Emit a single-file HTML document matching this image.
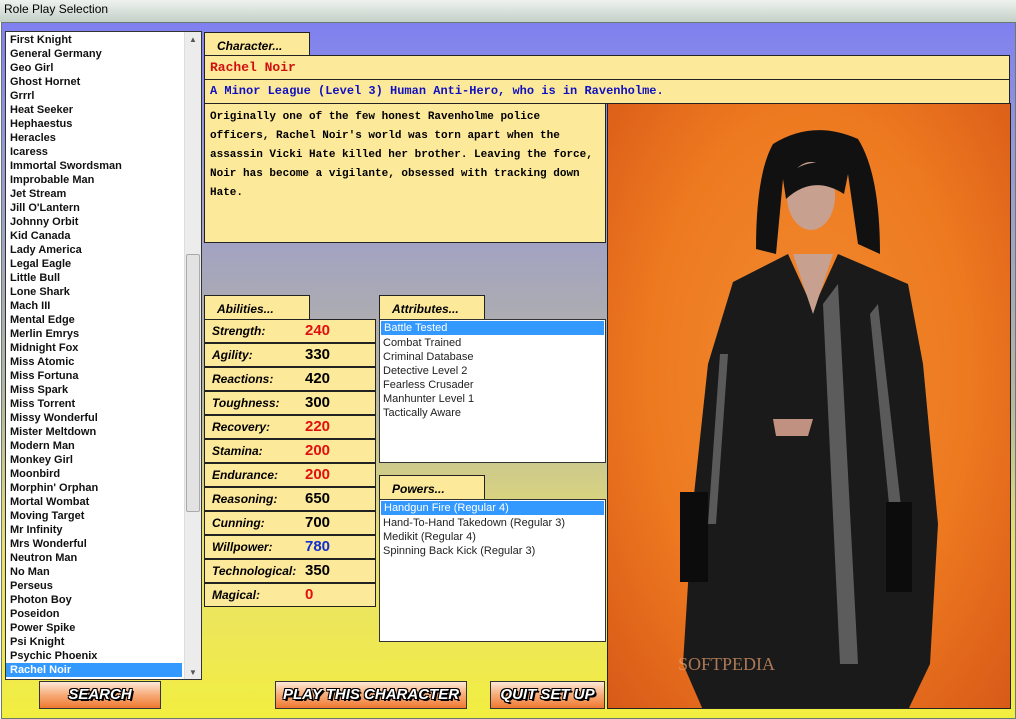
<!DOCTYPE html>
<html><head><meta charset="utf-8"><style>
*{margin:0;padding:0;box-sizing:border-box}
body{width:1016px;height:719px;overflow:hidden;position:relative;font-family:"Liberation Sans",sans-serif;background:#fff}
.title{position:absolute;left:0;top:0;width:1016px;height:22px;background:linear-gradient(#eef2ee,#c4d0c8);font-size:12px;padding:2px 4px;color:#000}
.main{position:absolute;left:1px;top:22px;width:1015px;height:697px;border:1px solid #6a7a70;background:linear-gradient(180deg,#7f80f0 0%,#9698d8 18%,#a8a8b8 38%,#b8b8a0 55%,#e8e070 75%,#f2ee40 100%)}
.abs{position:absolute}
.list{left:5px;top:31px;width:197px;height:649px;background:#fff;border:1px solid #333;padding-top:1px}
.list .it{height:14px;font-size:11px;font-weight:bold;line-height:14px;padding-left:4px;color:#111;width:176px}
.list .sel{background:#3399ff;color:#fff}
.sb{position:absolute;right:0;top:0;width:17px;height:100%;background:#ececec;border-left:1px solid #ddd}
.thumb{position:absolute;left:1px;top:222px;width:14px;height:258px;background:#e2e2e2;border:1px solid #aaa;border-radius:2px}
.panel{background:#fde99a;border:1px solid #222}
.tab{background:#fde99a;border:1px solid #222;border-bottom:none;font-weight:bold;font-style:italic;font-size:12px;padding:6px 0 0 12px}
.cm{font-family:"Liberation Mono",monospace;font-weight:bold}
.row{position:absolute;left:204px;width:172px;height:24px;background:#fde99a;border:1px solid #222;font-weight:bold;font-style:italic;font-size:12px;line-height:22px;padding-left:7px}
.row span{position:absolute;left:100px;font-style:normal;font-size:15px;font-family:"Liberation Sans",sans-serif;font-weight:bold}
.lb{background:#fff;border:1px solid #333;font-size:11px}
.lb div{height:14px;line-height:14px;padding-left:3px;color:#222}
.lb .sel{background:#3399ff;color:#fff;margin:1px}
.btn{position:absolute;top:681px;height:28px;border:1px solid #333;background:linear-gradient(#fde8d8,#f7b080 45%,#f07830);color:#fff;font-weight:bold;font-style:italic;font-size:15px;text-align:center;line-height:26px;text-shadow:-1px -1px 0 #000,1px -1px 0 #000,-1px 1px 0 #000,1px 1px 0 #000,2px 2px 0 #000}
</style></head><body>
<div class="title">Role Play Selection</div>
<div class="main"></div>
<div class="abs list">
<div class="it">First Knight</div><div class="it">General Germany</div><div class="it">Geo Girl</div><div class="it">Ghost Hornet</div><div class="it">Grrrl</div><div class="it">Heat Seeker</div><div class="it">Hephaestus</div><div class="it">Heracles</div><div class="it">Icaress</div><div class="it">Immortal Swordsman</div><div class="it">Improbable Man</div><div class="it">Jet Stream</div><div class="it">Jill O'Lantern</div><div class="it">Johnny Orbit</div><div class="it">Kid Canada</div><div class="it">Lady America</div><div class="it">Legal Eagle</div><div class="it">Little Bull</div><div class="it">Lone Shark</div><div class="it">Mach III</div><div class="it">Mental Edge</div><div class="it">Merlin Emrys</div><div class="it">Midnight Fox</div><div class="it">Miss Atomic</div><div class="it">Miss Fortuna</div><div class="it">Miss Spark</div><div class="it">Miss Torrent</div><div class="it">Missy Wonderful</div><div class="it">Mister Meltdown</div><div class="it">Modern Man</div><div class="it">Monkey Girl</div><div class="it">Moonbird</div><div class="it">Morphin' Orphan</div><div class="it">Mortal Wombat</div><div class="it">Moving Target</div><div class="it">Mr Infinity</div><div class="it">Mrs Wonderful</div><div class="it">Neutron Man</div><div class="it">No Man</div><div class="it">Perseus</div><div class="it">Photon Boy</div><div class="it">Poseidon</div><div class="it">Power Spike</div><div class="it">Psi Knight</div><div class="it">Psychic Phoenix</div><div class="it sel">Rachel Noir</div>
<div class="sb"><div style="font-size:8px;text-align:center;color:#555;margin-top:3px">▲</div><div class="thumb"></div><div style="position:absolute;bottom:2px;width:100%;font-size:8px;text-align:center;color:#555">▼</div></div>
</div>

<div class="abs tab" style="left:204px;top:32px;width:106px;height:24px">Character...</div>
<div class="abs panel cm" style="left:204px;top:55px;width:806px;height:25px;color:#d01010;font-size:13px;line-height:23px;padding-left:5px">Rachel Noir</div>
<div class="abs panel cm" style="left:204px;top:79px;width:806px;height:25px;color:#1010c0;font-size:12px;line-height:23px;padding-left:5px">A Minor League (Level 3) Human Anti-Hero, who is in Ravenholme.</div>
<div class="abs panel cm" style="left:204px;top:103px;width:402px;height:140px;font-size:11px;line-height:19px;padding:4px 5px">Originally one of the few honest Ravenholme police officers, Rachel Noir's world was torn apart when the assassin Vicki Hate killed her brother. Leaving the force, Noir has become a vigilante, obsessed with tracking down Hate.</div>

<div class="abs tab" style="left:204px;top:295px;width:106px;height:25px">Abilities...</div>
<div class="row" style="top:319px">Strength:<span style="color:#e01010">240</span></div>
<div class="row" style="top:343px">Agility:<span>330</span></div>
<div class="row" style="top:367px">Reactions:<span>420</span></div>
<div class="row" style="top:391px">Toughness:<span>300</span></div>
<div class="row" style="top:415px">Recovery:<span style="color:#e01010">220</span></div>
<div class="row" style="top:439px">Stamina:<span style="color:#e01010">200</span></div>
<div class="row" style="top:463px">Endurance:<span style="color:#e01010">200</span></div>
<div class="row" style="top:487px">Reasoning:<span>650</span></div>
<div class="row" style="top:511px">Cunning:<span>700</span></div>
<div class="row" style="top:535px">Willpower:<span style="color:#1030d0">780</span></div>
<div class="row" style="top:559px">Technological:<span>350</span></div>
<div class="row" style="top:583px">Magical:<span style="color:#e01010">0</span></div>

<div class="abs tab" style="left:379px;top:295px;width:106px;height:25px">Attributes...</div>
<div class="abs lb" style="left:379px;top:319px;width:227px;height:144px"><div class="sel">Battle Tested</div><div>Combat Trained</div><div>Criminal Database</div><div>Detective Level 2</div><div>Fearless Crusader</div><div>Manhunter Level 1</div><div>Tactically Aware</div></div>
<div class="abs tab" style="left:379px;top:475px;width:106px;height:25px">Powers...</div>
<div class="abs lb" style="left:379px;top:499px;width:227px;height:143px"><div class="sel">Handgun Fire (Regular 4)</div><div>Hand-To-Hand Takedown (Regular 3)</div><div>Medikit (Regular 4)</div><div>Spinning Back Kick (Regular 3)</div></div>

<div class="abs" style="left:607px;top:103px;width:404px;height:606px;border:1px solid #222;background:radial-gradient(ellipse at 50% 45%,#f08a30 0%,#ee7a20 55%,#d85a18 100%);overflow:hidden">
<svg width="404" height="606" viewBox="0 0 404 606">
<path d="M165,40 Q205,15 250,35 Q272,70 272,150 L250,140 L240,70 L175,75 L168,150 L148,145 Q148,70 165,40Z" fill="#111"/>
<ellipse cx="203" cy="92" rx="24" ry="34" fill="#c8a090"/>
<path d="M175,75 Q205,45 240,70 L236,90 Q205,70 178,95Z" fill="#111"/>
<path d="M125,178 L180,150 L205,205 L230,150 L300,180 L315,260 L330,420 L322,560 L300,606 L95,606 L75,560 L85,400 L100,260Z" fill="#1a1a1a"/>
<path d="M185,150 L225,150 L205,210Z" fill="#c8a090"/>
<path d="M165,315 L205,315 L200,332 L168,332Z" fill="#c09080"/>
<path d="M230,180 L250,560 L232,560 L215,200Z" fill="#888" opacity=".6"/>
<path d="M270,200 L295,420 L283,420 L262,210Z" fill="#999" opacity=".5"/>
<path d="M120,250 L108,420 L100,420 L112,250Z" fill="#999" opacity=".5"/>
<rect x="72" y="388" width="28" height="90" fill="#0c0c0c"/>
<rect x="278" y="398" width="26" height="90" fill="#0c0c0c"/>
<text x="70" y="566" font-family="Liberation Serif" font-size="18" fill="#e8a070" opacity=".7">SOFTPEDIA</text>
</svg>
</div>

<div class="btn" style="left:39px;width:122px">SEARCH</div>
<div class="btn" style="left:275px;width:192px">PLAY THIS CHARACTER</div>
<div class="btn" style="left:490px;width:115px">QUIT SET UP</div>
</body></html>
